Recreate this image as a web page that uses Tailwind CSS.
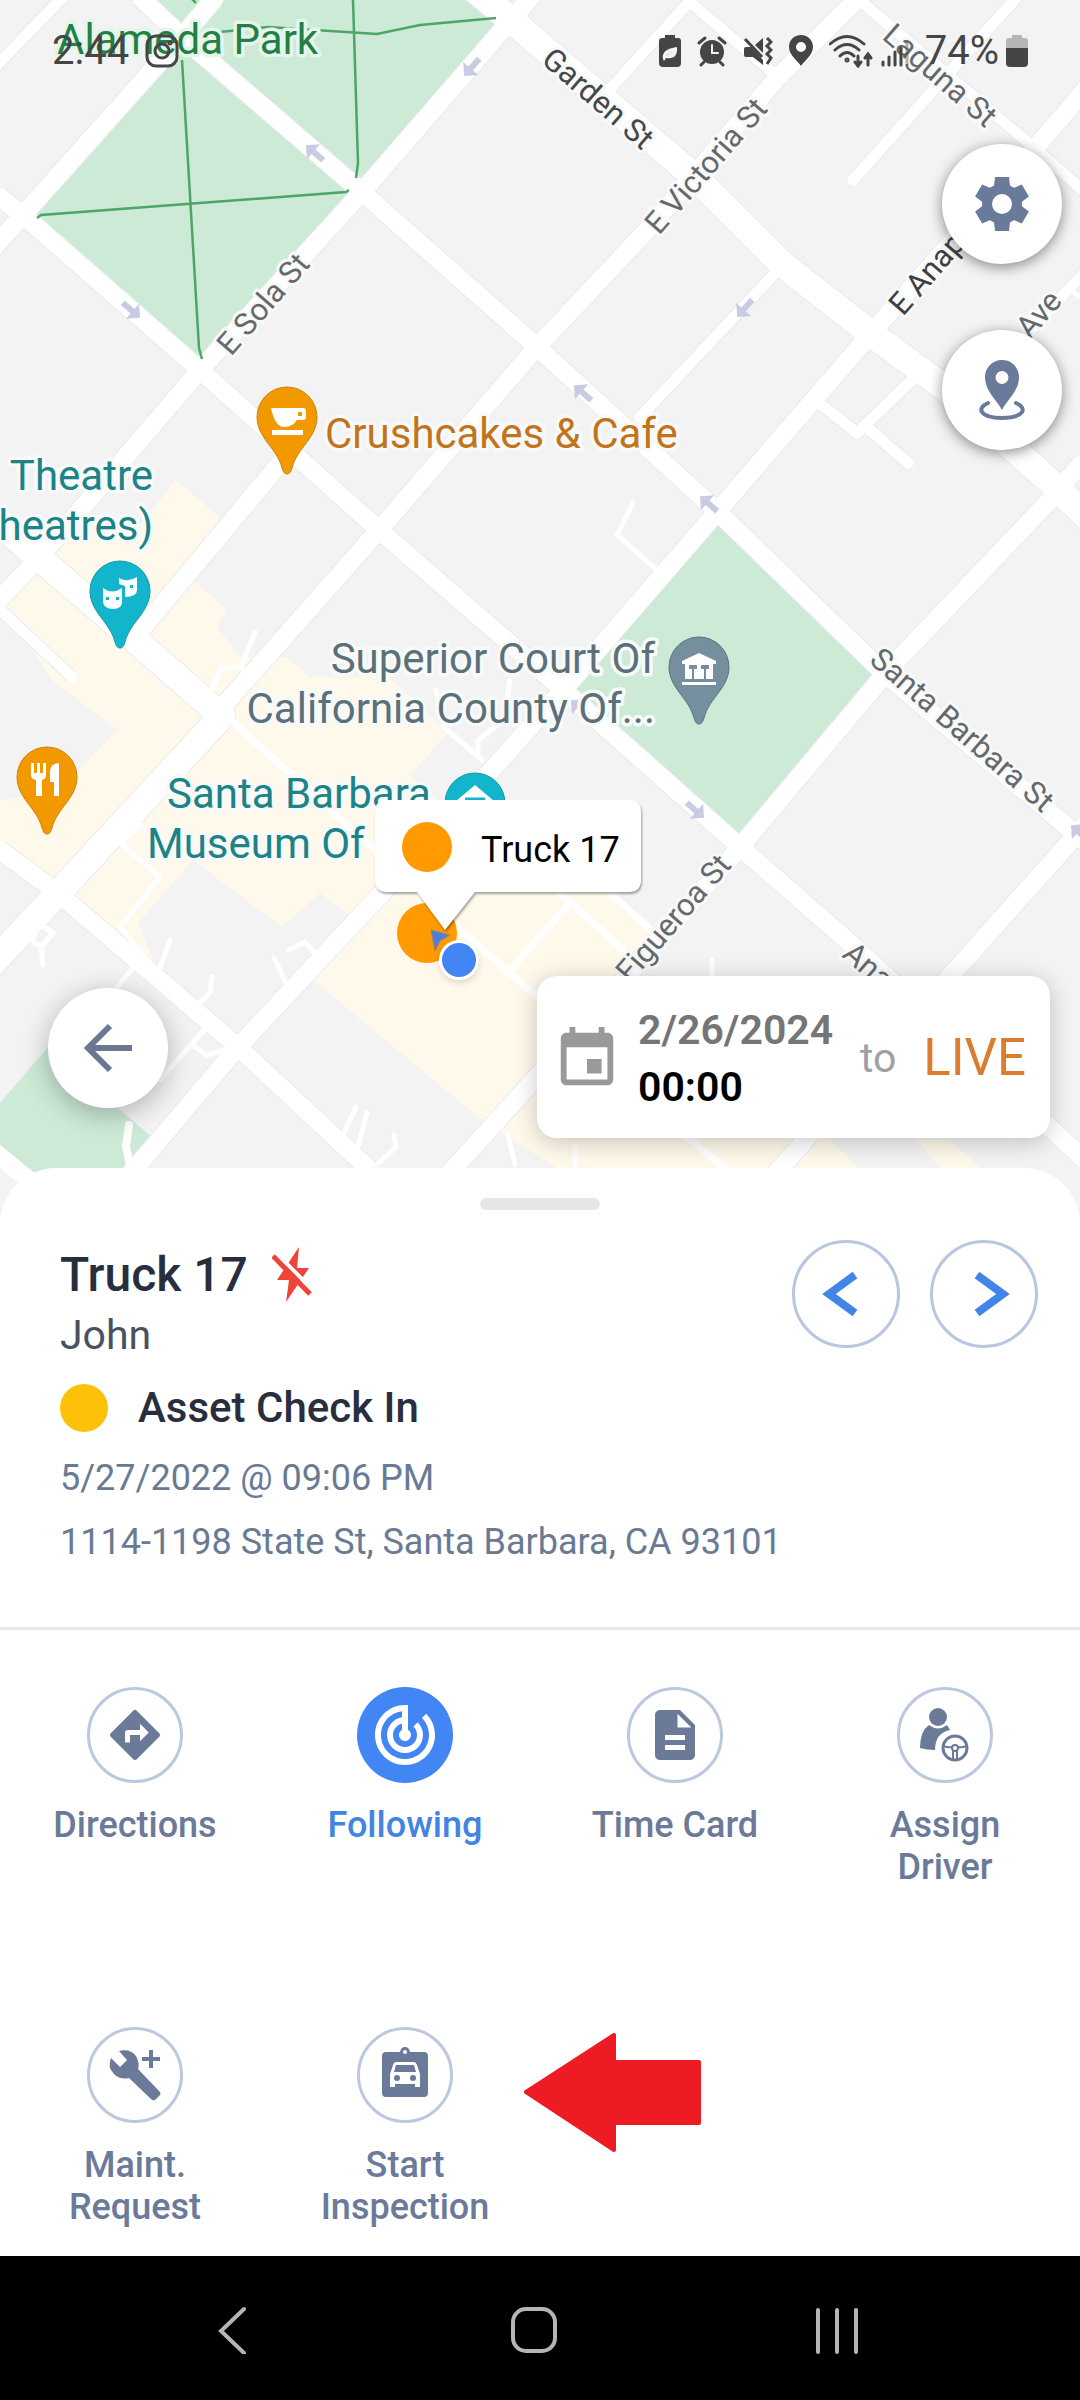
<!DOCTYPE html>
<html lang="en">
<head>
  <meta charset="UTF-8" />
  <meta name="viewport" content="width=device-width, initial-scale=1.0"/>
  <title>Truck 17</title>
  <script src="https://cdn.jsdelivr.net/npm/@tailwindcss/browser@4"></script>
</head>
<body class="min-h-screen flex flex-col bg-white font-[Roboto,sans-serif] text-[36px]">

  <main class="relative flex flex-col min-h-[1216px] bg-[#f3f3f3] overflow-hidden">

    <!-- map -->
    <svg class="absolute inset-0 w-full h-full" viewBox="0 0 1080 1216" preserveAspectRatio="xMidYMid slice" role="img" aria-label="Map of Santa Barbara">
      <defs>
        <path id="pin" d="M0 0C-3 0-4-3-5-6C-10-26-30-36-30-57A30 30 0 0 1 30-57C30-36 10-26 5-6C4-3 3 0 0 0z" />
        <path id="oneway" d="M-11-3H2V-10L12 0L2 10V3H-11z" />
      </defs>

      <!-- parks -->
      <g fill="#cdead7">
        <path d="M130 0H490L511 20L362 192L200 368L23 215L182 37z" />
        <path d="M717 516L884 672L740 845L563 690z" />
        <path d="M48 1047L155 1140L130 1216H60L0 1145V1103z" />
      </g>

      <!-- business areas -->
      <g fill="#fef9ea">
        <path d="M176 480L220 517L140 630L52 553L80 525L140 525z" />
        <path d="M193 580L227 610L217 627L241 657H286L310 677H389L448 733L410 775L470 830L385 900L348 914L320 893L282 927L193 860L138 923L158 970L65 893L215 720L140 635z" />
        <path d="M38 572L127 635L215 715L58 893L0 845V800L60 790L117 730L52 680L5 607z" />
        <path d="M392 870H580L657 937L626 973L730 1060L831 1140L860 1170H560L482 1120L313 980z" />
        <path d="M916 1140H950L985 1172H945z" />
      </g>

      <!-- roads: grey casing first, then white on top -->
      <g fill="none" stroke="#ebebee" stroke-linejoin="round">
        <path stroke-width="20" d="M141 -2L182 37L362 192L537 347L719 513L884 673L1090 846M0 197L23 215L200 370L379 530L560 687L740 847L850 943L1090 1165M0 850L58 893L238 1047L400 1198M215 -2L182 37L23 215L-5 246M537 -10L511 20L362 192L200 370L40 557L-5 604M887 -30L778 77L650 227L537 347L379 530L217 713M1085 90L1036 147L874 330L716 513L563 690L382 893L238 1047L110 1198M1080 465L1050 500L891 667L740 847L600 1007L437 1187M1085 825L953 973L770 1180M287 455L135 637" />
        <path stroke-width="28" d="M475 -10L511 20L695 177L781 263L870 333L945 388L1053 484L1090 520M0 524L38 557L127 633L222 716L58 893L-10 966" />
        <path stroke-width="13" d="M700 -10L612 87M690 2L778 77M857 -2L1025 140L1085 192M1025 -12L853 180M781 267L640 417M65 -5L-4 66M1085 272L1010 352M819 403L857 433L912 380M870 430L908 463M-4 606L72 677" />
      </g>
      <g fill="none" stroke="#ffffff" stroke-linejoin="round" stroke-linecap="round">
        <path stroke-width="18" d="M141 -2L182 37L362 192L537 347L719 513L884 673L1090 846M0 197L23 215L200 370L379 530L560 687L740 847L850 943L1090 1165M0 850L58 893L238 1047L400 1198M215 -2L182 37L23 215L-5 246M537 -10L511 20L362 192L200 370L40 557L-5 604M887 -30L778 77L650 227L537 347L379 530L217 713M1085 90L1036 147L874 330L716 513L563 690L382 893L238 1047L110 1198M1080 465L1050 500L891 667L740 847L600 1007L437 1187M1085 825L953 973L770 1180M287 455L135 637" />
        <path stroke-width="26" d="M475 -10L511 20L695 177L781 263L870 333L945 388L1053 484L1090 520M0 524L38 557L127 633L222 716L58 893L-10 966" />
        <path stroke-width="11" d="M700 -10L612 87M690 2L778 77M857 -2L1025 140L1085 192M1025 -12L853 180M781 267L640 417M65 -5L-4 66M1085 272L1010 352M819 403L857 433L912 380M870 430L908 463M-4 606L72 677" />
        <path stroke-width="18" d="M-10 1148L60 1206" />
        <path stroke-width="7" d="M231 720L289 773L372 847L457 927L537 997L691 1140L734 1176M560 893L640 965M610 893L660 938M570 903L507 973" />
        <path stroke-width="5" d="M255 632L241 667L248 677M241 667L221 668L210 693M436 690L444 727L482 760M510 680L504 720L478 740V752M633 503L617 535L657 570M140 825L120 843L160 877L120 927L158 973L170 940M212 977L210 993L196 1007M289 950L305 942L315 953M274 958L286 983M134 967L117 987M43 965L41 947L31 940L41 925L53 933L41 947M207 1027L160 1080M195 1047L207 1055L224 1050M356 1107L341 1140M367 1113L358 1147M394 1135L396 1147L379 1163M508 1135L515 1165M712 960V980M575 1145V1165M1070 290L1085 300" />
        <path stroke-width="8" d="M129 1125L126 1147L131 1170" />
      </g>

      <!-- park paths -->
      <path fill="none" stroke="#4ba667" stroke-width="2.5" d="M182 60L199 348L202 359M37 218L41 215L346 192L349 190M353 0L358 163L356 178M220 32L268 27L377 34L420 25L496 18M191 -2L196 3" />

      <!-- one-way arrows -->
      <g fill="#c9cbe2">
        <use href="#oneway" transform="translate(472 67) rotate(131)" />
        <use href="#oneway" transform="translate(315 153) rotate(221)" />
        <use href="#oneway" transform="translate(131 310) rotate(41)" />
        <use href="#oneway" transform="translate(745 308) rotate(131)" />
        <use href="#oneway" transform="translate(583 393) rotate(221)" />
        <use href="#oneway" transform="translate(709 504) rotate(221)" />
        <use href="#oneway" transform="translate(695 810) rotate(41)" />
        <use href="#oneway" transform="translate(580 708) rotate(221)" />
        <use href="#oneway" transform="translate(1080 833) rotate(221)" />
      </g>

      <!-- street names -->
      <g class="text-[31px] [paint-order:stroke]" fill="#65686c" stroke="#f8f9f9" stroke-width="6" stroke-linejoin="round">
        <text transform="translate(231 357) rotate(-49)">E Sola St</text>
        <text transform="translate(540 62) rotate(41)" fill="#44474a">Garden St</text>
        <text transform="translate(659 236) rotate(-49)">E Victoria St</text>
        <text transform="translate(881 38) rotate(41)">Laguna St</text>
        <text transform="translate(903 317) rotate(-49)" fill="#3c4043">E Anapamu St</text>
        <text transform="translate(1030 340) rotate(-49)">Ave</text>
        <text transform="translate(868 662) rotate(41)">Santa Barbara St</text>
        <text transform="translate(630 984) rotate(-49)">Figueroa St</text>
        <text transform="translate(841 956) rotate(41)">Anacapa St</text>
        <text transform="translate(360 1181) rotate(41)">Chapala St</text>
      </g>

      <!-- places -->
      <g class="text-[42px] [paint-order:stroke]" stroke="#f8fafa" stroke-width="7" stroke-linejoin="round">
        <text x="57" y="54" fill="#238044" stroke="#e6f5eb">Alameda Park</text>
        <text x="325" y="448" fill="#c3741a">Crushcakes &amp; Cafe</text>
        <g fill="#1c8386">
          <text x="153" y="490" text-anchor="end">Theatre</text>
          <text x="153" y="540" text-anchor="end">heatres)</text>
          <text x="167" y="808">Santa Barbara</text>
          <text x="147" y="858">Museum Of</text>
        </g>
        <g fill="#5b7079" text-anchor="end">
          <text x="655" y="673">Superior Court Of</text>
          <text x="655" y="723">California County Of...</text>
        </g>
      </g>

      <!-- place pins -->
      <use href="#pin" x="287" y="474" fill="#f29900" stroke="#d08410" stroke-width="1" />
      <path fill="#fff" fill-rule="evenodd" d="M271 408H303Q306 408 306 411V417Q306 420 303 420H297Q293 427 284 427Q275 427 271 408zM298 412V416H302V412zM272 430H303V435H272z" />
      <use href="#pin" x="120" y="648" fill="#12b5cb" stroke="#159ba8" stroke-width="1" />
      <path fill="#fff" fill-rule="evenodd" d="M103 588Q112 595 122 588V602Q122 609 113 609Q104 609 103 602zM106 597H109V600H106zM116 597H119V600H116zM119 578Q128 583 137 577V590Q137 597 125 597V586L119 584zM130 585H133V588H130z" />
      <use href="#pin" x="47" y="834" fill="#f29900" stroke="#d08410" stroke-width="1" />
      <path fill="#fff" d="M31 763H34V773H37V763H40V773H43V763H46V775Q46 779 42 780V796H36V780Q31 779 31 775zM59 763V796H54V782H50V773Q50 763 59 763z" />
      <use href="#pin" x="699" y="724" fill="#758f9f" stroke="#5a7482" stroke-width="1" />
      <path fill="#fff" fill-rule="evenodd" d="M699 653L716 661V664H713V679H685V664H682V661zM689 665V669H692V679H694V669H697V665zM701 665V669H704V679H706V669H709V665zM682 682H716V685H682z" />
      <use href="#pin" x="475" y="860" fill="#12b5cb" stroke="#159ba8" stroke-width="1" />
      <path fill="#fff" d="M475 785L494 801H456z" />
      <path stroke="#12b5cb" stroke-width="3" d="M465 799H485" />

      <!-- vehicle -->
      <circle cx="427" cy="933" r="30" fill="#ff9a00" />
      <path fill="#4a80e0" stroke="#b28350" stroke-width="1" d="M431 930L450 935L440 941L435 951z" />
      <circle cx="459" cy="960" r="20" fill="#fff" class="drop-shadow-md" />
      <circle cx="459" cy="960" r="17" fill="#4285f4" />
      <g class="drop-shadow-[1px_2px_1px_rgb(0_0_0/0.35)]">
        <path fill="#fff" d="M387 800H629Q641 800 641 812V880Q641 892 629 892H475L445 930L417 892H387Q375 892 375 880V812Q375 800 387 800z" />
      </g>
      <circle cx="427" cy="847" r="25" fill="#ff9a00" />
      <text x="481" y="862" class="text-[36px]" fill="#000">Truck 17</text>
    </svg>

    <!-- status bar -->
    <header class="relative h-[102px] flex items-center justify-between pl-[52px] pr-[52px] text-[40px] leading-[44px] text-[#454545]">
      <div class="flex items-center gap-4">
        <time>2:44</time>
        <svg class="size-[34px]" viewBox="0 0 34 34" fill="none" stroke="currentColor" stroke-width="3">
          <rect x="2" y="2" width="30" height="30" rx="9" /><circle cx="17" cy="17" r="7" /><circle cx="25" cy="9" r="1" />
        </svg>
      </div>
      <div class="flex items-center gap-4">
        <svg class="w-[22px] h-8" viewBox="0 0 22 32" fill="currentColor">
          <path d="M6 0H16V3H19Q22 3 22 6V28Q22 32 18 32H4Q0 32 0 28V6Q0 3 3 3H6z" />
          <path fill="#f2f3f3" d="M4 24Q2 14 18 12Q19 25 7 23L5 26zM7 21L14 16L8 20z" />
        </svg>
        <svg class="w-[30px] h-8" viewBox="0 0 30 32" fill="none" stroke="currentColor" stroke-width="3" stroke-linecap="round">
          <circle cx="15" cy="17" r="12" fill="currentColor" stroke="none" />
          <path d="M2 8L8 3M28 8L22 3M7 27L4 30M23 27L26 30" /><path stroke="#f2f3f3" stroke-width="2" d="M15 10V18H21" />
        </svg>
        <svg class="w-[30px] h-8" viewBox="0 0 30 32" fill="none" stroke="currentColor" stroke-width="3">
          <path fill="currentColor" stroke="none" d="M1 14Q1 12 3 12H8L20 25V30L10 22H3Q1 22 1 20zM20 3V18L12 10z" />
          <path d="M2 4L19 22M24 3L28 7L24 11L28 15L24 19L28 23L24 29" />
        </svg>
        <svg class="w-6 h-8" viewBox="0 0 24 32" fill="currentColor" fill-rule="evenodd">
          <path d="M12 0C5 0 0 5 0 12C0 20 8 25 12 31C16 25 24 20 24 12C24 5 19 0 12 0zM12 7A5 5 0 1 1 12 17A5 5 0 1 1 12 7z" />
        </svg>
        <svg class="w-[44px] h-[34px]" viewBox="0 0 44 34" fill="none" stroke="currentColor" stroke-width="3" stroke-linecap="round">
          <path d="M1 10Q18 -5 35 10M6 16Q18 5 30 16M11 22Q18 15 25 22M29 22V31M26 28L29 32L32 28M39 31V21M36 24L39 20L42 24" />
          <circle cx="18" cy="26" r="1" />
        </svg>
        <div class="flex items-center -ml-2">
          <svg class="w-7 h-8 mr-4" viewBox="0 0 28 32" fill="none" stroke="currentColor" stroke-width="3" stroke-linecap="round">
            <path d="M2 27V30M8 22V30M14 17V30M20 13V30" /><path opacity=".4" d="M26 8V30" />
          </svg>
          <span class="mr-[7px]">74%</span>
          <svg class="w-[22px] h-8" viewBox="0 0 22 32" fill="currentColor">
            <path opacity=".35" d="M6 0H16V3H19Q22 3 22 6V13H0V6Q0 3 3 3H6z" /><path d="M0 13H22V28Q22 32 18 32H4Q0 32 0 28z" />
          </svg>
        </div>
      </div>
    </header>

    <!-- map controls -->
    <div class="relative flex flex-col items-end gap-[66px] mt-[42px] pr-[18px] text-[#697a9b]">
      <button type="button" aria-label="Map settings" class="size-[120px] rounded-full bg-white shadow-[0_3px_14px_rgb(0_0_0/0.45)] grid place-items-center">
        <svg class="size-14" viewBox="-28 -28 56 56" fill="currentColor">
          <path id="tooth" d="M-7 -27H7L8 -18L12 -10H-12L-8 -18z" />
          <use href="#tooth" transform="rotate(60)" /><use href="#tooth" transform="rotate(120)" />
          <use href="#tooth" transform="rotate(180)" /><use href="#tooth" transform="rotate(240)" /><use href="#tooth" transform="rotate(300)" />
          <circle r="20" /><circle r="10" fill="#fff" />
        </svg>
      </button>
      <button type="button" aria-label="Center on vehicle" class="size-[120px] rounded-full bg-white shadow-[0_3px_14px_rgb(0_0_0/0.45)] grid place-items-center">
        <svg class="w-12 h-[60px]" viewBox="0 0 48 60">
          <path fill="currentColor" fill-rule="evenodd" d="M24 0C14 0 7 8 7 17C7 31 18 39 24 50C30 39 41 31 41 17C41 8 34 0 24 0zM24 11A6 6 0 1 1 24 24A6 6 0 1 1 24 11z" />
          <path fill="none" stroke="currentColor" stroke-width="4" stroke-linecap="round" d="M10 43C-2 48 2 58 24 58C46 58 50 48 38 43" />
        </svg>
      </button>
    </div>

    <div class="relative mt-auto flex items-end justify-between pl-12 pr-[30px] pb-[78px]">
      <button type="button" aria-label="Back" class="size-[120px] mb-[30px] rounded-full bg-white shadow-[0_6px_28px_rgb(0_0_0/0.28)] grid place-items-center text-[#6c7791]">
        <svg class="size-14" viewBox="0 0 56 56" fill="none" stroke="currentColor" stroke-width="6">
          <path d="M52 28H8M30 6L8 28L30 50" />
        </svg>
      </button>

      <div class="w-[513px] h-[162px] rounded-[20px] bg-white shadow-[0_4px_24px_rgb(0_0_0/0.22)] flex items-center justify-between pt-[3px] pl-[15px] pr-6">
        <button type="button" class="flex items-center gap-4 text-left font-semibold text-[41px] leading-[57px]">
          <svg class="size-[70px] text-[#999999]" viewBox="0 0 24 24" fill="currentColor">
            <path d="M17 12h-5v5h5v-5zM16 1v2H8V1H6v2H5c-1.110 0-1.990.9-1.990 2L3 19c0 1.100.89 2 2 2h14c1.100 0 2-.9 2-2V5c0-1.100-.9-2-2-2h-1V1h-2zm3 18H5V8h14v11z" />
          </svg>
          <span>
            <span class="block text-[#757575]">2/26/2024</span>
            <span class="block text-black">00:00</span>
          </span>
        </button>
        <span class="text-[41px] text-[#a0a0a0]">to</span>
        <button type="button" class="text-[51px] text-[#dc7d2d]">LIVE</button>
      </div>
    </div>
  </main>

  <!-- bottom sheet -->
  <section class="relative -mt-12 grow bg-white rounded-t-[56px] pt-[30px]">
    <div class="w-[120px] h-3 mx-auto rounded-full bg-[#e6e6e6]"></div>

    <div class="flex items-start justify-between mt-[30px] pl-[60px] pr-[42px] pb-[63px] border-b-3 border-[#e7e7e7]">
      <div class="pt-[7px] text-[#697a94]">
        <div class="flex items-center gap-6">
          <h1 class="text-[48px] leading-[56px] font-medium text-[#282e3e]">Truck 17</h1>
          <svg class="w-10 h-14" viewBox="0 0 40 56" role="img" aria-label="Ignition off">
            <path fill="#f04438" d="M27 0L5 33H17L14 55L37 21H25z" />
            <path stroke="#fff" stroke-width="4" d="M4 6L41 43" />
            <path stroke="#f04438" stroke-width="5" d="M1 9L38 47" />
          </svg>
        </div>
        <p class="mt-2 text-[41px] leading-[48px] text-[#495061]">John</p>
        <div class="mt-[25px] flex items-center gap-[30px]">
          <span class="size-12 rounded-full bg-[#fdc10a]"></span>
          <h2 class="text-[42px] leading-[48px] font-medium text-[#282e3e]">Asset Check In</h2>
        </div>
        <p class="mt-6 leading-[44px]">5/27/2022 @ 09:06 PM</p>
        <p class="mt-5 leading-[44px]">1114-1198 State St, Santa Barbara, CA 93101</p>
      </div>
      <div class="flex gap-[30px] text-[#4285e8]">
        <button type="button" aria-label="Previous" class="size-[108px] rounded-full border-3 border-[#b8c6e0] grid place-items-center">
          <svg class="size-12 mr-3" viewBox="0 0 48 48" fill="none" stroke="currentColor" stroke-width="8"><path d="M39 5L13 24L39 43" /></svg>
        </button>
        <button type="button" aria-label="Next" class="size-[108px] rounded-full border-3 border-[#b8c6e0] grid place-items-center">
          <svg class="size-12 ml-3" viewBox="0 0 48 48" fill="none" stroke="currentColor" stroke-width="8"><path d="M11 5L37 24L11 43" /></svg>
        </button>
      </div>
    </div>

    <!-- actions -->
    <ul class="grid grid-cols-4 gap-y-[139px] pt-[57px] pb-7 font-medium leading-[42px] text-center text-[#6b7a99]">
      <li>
        <button type="button" class="w-full flex flex-col items-center gap-[21px]">
          <span class="size-24 rounded-full border-3 border-[#bcc8df] grid place-items-center">
            <svg class="size-[60px]" viewBox="0 0 24 24" fill="currentColor"><path d="M21.710 11.290l-9-9a1 1 0 0 0-1.410 0l-9 9c-.39.39-.39 1.020 0 1.410l9 9c.39.39 1.020.39 1.410 0l9-9c.39-.38.39-1.010 0-1.410zM14 14.500V12h-4v3H8v-4c0-.55.45-1 1-1h5V7.500l3.500 3.500-3.500 3.500z" /></svg>
          </span>
          Directions
        </button>
      </li>
      <li>
        <button type="button" aria-pressed="true" class="w-full flex flex-col items-center gap-[21px] text-[#4285e0]">
          <span class="size-24 rounded-full bg-[#4285f4] text-white grid place-items-center">
            <svg class="size-[72px]" viewBox="0 0 24 24" fill="currentColor"><path d="M19.070 4.930l-1.410 1.410C19.100 7.790 20 9.790 20 12c0 4.420-3.580 8-8 8s-8-3.580-8-8c0-4.080 3.050-7.440 7-7.930v2.020C8.160 6.570 6 9.030 6 12c0 3.310 2.690 6 6 6s6-2.690 6-6c0-1.660-.67-3.160-1.760-4.240l-1.410 1.410C15.550 9.900 16 10.900 16 12c0 2.210-1.790 4-4 4s-4-1.790-4-4c0-1.860 1.280-3.410 3-3.860v2.140c-.6.35-1 .98-1 1.720 0 1.100.9 2 2 2s2-.9 2-2c0-.74-.4-1.380-1-1.720V2h-1C6.480 2 2 6.480 2 12s4.480 10 10 10 10-4.480 10-10c0-2.760-1.120-5.260-2.930-7.070z" /></svg>
          </span>
          Following
        </button>
      </li>
      <li>
        <button type="button" class="w-full flex flex-col items-center gap-[21px]">
          <span class="size-24 rounded-full border-3 border-[#bcc8df] grid place-items-center">
            <svg class="size-[60px]" viewBox="0 0 24 24" fill="currentColor"><path d="M14 2H6c-1.100 0-1.990.9-1.990 2L4 20c0 1.100.89 2 1.990 2H18c1.100 0 2-.9 2-2V8l-6-6zm2 16H8v-2h8v2zm0-4H8v-2h8v2zm-3-5V3.500L18.500 9H13z" /></svg>
          </span>
          Time Card
        </button>
      </li>
      <li>
        <button type="button" class="w-full flex flex-col items-center gap-[21px]">
          <span class="size-24 rounded-full border-3 border-[#bcc8df] grid place-items-center">
            <svg class="size-[60px]" viewBox="0 0 60 60" fill="currentColor">
              <circle cx="23" cy="12" r="9" />
              <path d="M14 20Q23 27 32 20L35 25Q20 28 20 45Q12 45 5 43Q5 26 14 20z" />
              <g fill="none" stroke="currentColor" stroke-width="3">
                <circle cx="40" cy="43" r="12" /><circle cx="40" cy="43" r="3" stroke-width="2" />
                <path d="M28 41Q34 43 37 42M52 41Q46 43 43 42M38 46V54M42 46V54" stroke-width="2" />
              </g>
            </svg>
          </span>
          <span>Assign<br>Driver</span>
        </button>
      </li>
      <li>
        <button type="button" class="w-full flex flex-col items-center gap-[21px]">
          <span class="size-24 rounded-full border-3 border-[#bcc8df] grid place-items-center">
            <svg class="size-[60px]" viewBox="0 0 60 60" fill="currentColor">
              <path d="M14 6Q25 3 31 11Q35 18 33 24L55 47Q56 49 55 50L50 55Q48 56 46 54L24 33Q15 35 9 29Q2 22 6 13L15 22L22 15z" />
              <path d="M44 5H48V12H55V16H48V23H44V16H37V12H44z" />
            </svg>
          </span>
          <span>Maint.<br>Request</span>
        </button>
      </li>
      <li class="relative">
        <button type="button" class="w-full flex flex-col items-center gap-[21px]">
          <span class="size-24 rounded-full border-3 border-[#bcc8df] grid place-items-center">
            <svg class="size-[60px]" viewBox="0 0 60 60" fill="currentColor">
              <path fill-rule="evenodd" d="M11 7H25Q26 2 30 2Q34 2 35 7H49Q53 7 53 11V48Q53 52 49 52H11Q7 52 7 48V11Q7 7 11 7zM30 5A2 2 0 1 0 30 9A2 2 0 1 0 30 5z" />
              <path fill="#fff" fill-rule="evenodd" d="M21 17H39Q41 17 42 20L45 29V42H40V39H20V42H15V29L18 20Q19 17 21 17zM21 20L19 27H41L39 20z" />
              <circle cx="22" cy="33" r="3" /><circle cx="38" cy="33" r="3" />
            </svg>
          </span>
          <span>Start<br>Inspection</span>
        </button>
        <svg class="absolute top-1.5 left-[254px] w-[178px] h-[120px] pointer-events-none" viewBox="0 0 178 120" fill="#ed1c24" stroke="#ed1c24" stroke-width="4" stroke-linejoin="round" aria-hidden="true">
          <path d="M2 59L90 2V29H175V90H90V117z" />
        </svg>
      </li>
    </ul>
  </section>

  <!-- system navigation -->
  <nav class="h-[144px] pt-[3px] bg-black flex items-center justify-between pl-[208px] pr-[218px] text-[#b5b5b5]">
    <button type="button" aria-label="Back">
      <svg class="size-12" viewBox="0 0 48 48" fill="none" stroke="currentColor" stroke-width="4" stroke-linecap="round"><path d="M36 3L13 25L36 47" /></svg>
    </button>
    <button type="button" aria-label="Home">
      <svg class="size-12" viewBox="0 0 48 48" fill="none" stroke="currentColor" stroke-width="4"><rect x="2" y="3" width="42" height="42" rx="13" /></svg>
    </button>
    <button type="button" aria-label="Recent apps">
      <svg class="size-12" viewBox="0 0 48 48" fill="none" stroke="currentColor" stroke-width="4" stroke-linecap="round"><path d="M4 4V46M23 4V46M42 4V46" /></svg>
    </button>
  </nav>

</body>
</html>
